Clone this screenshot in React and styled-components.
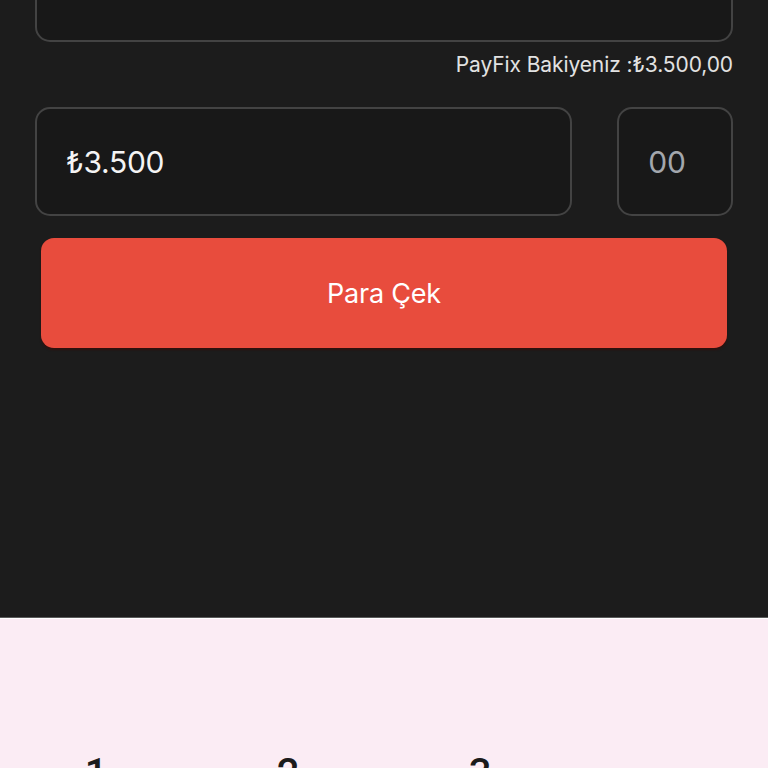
import React from "react";
import styled, { createGlobalStyle } from "styled-components";

const Global = createGlobalStyle`
  html, body { margin: 0; padding: 0; background: #1c1c1c; }
  body { font-family: Inter, "Noto Sans", sans-serif; overflow: hidden; }
  * { box-sizing: border-box; }
`;

const Page = styled.div`
  width: 768px;
  height: 768px;
  display: flex;
  flex-direction: column;
  overflow: hidden;
`;

const Form = styled.div`
  height: 617px;
  flex-shrink: 0;
  padding: 0 35px;
  display: flex;
  flex-direction: column;
  background: #1c1c1c;
`;

const Field = styled.div`
  height: 109px;
  border: 2px solid #434343;
  border-radius: 15px;
  background: #181818;
  display: flex;
  align-items: center;
  padding: ${(p) => (p.$center ? "0 16px 0 0" : "0 0 0 29px")};
  justify-content: ${(p) => (p.$center ? "center" : "flex-start")};
  flex: ${(p) => (p.$grow ? "1" : "none")};
  width: ${(p) => p.$w || "auto"};
  color: ${(p) => (p.$muted ? "#a3a7ad" : "#f4f4f4")};
  font-size: 30px;
  letter-spacing: -0.3px;
`;

const TopField = styled(Field)`
  margin-top: -67px;
`;

const Balance = styled.div`
  margin-top: 11px;
  text-align: right;
  font-size: 21px;
  line-height: 24px;
  color: #e2e2e2;
  letter-spacing: -0.1px;
`;

const Row = styled.div`
  margin-top: 30px;
  display: flex;
  gap: 45px;
`;

const Button = styled.button`
  margin: 22px 6px 0;
  height: 110px;
  border: none;
  border-radius: 13px;
  background: #e84c3d;
  color: #ffffff;
  font-family: inherit;
  font-size: 27px;
  letter-spacing: -0.2px;
  box-shadow: 0 2px 2px rgba(60, 10, 5, 0.6);
`;

const Keypad = styled.div`
  flex: 1;
  background: #fbecf4;
  border-top: 1px solid #5a5a5a;
  box-shadow: inset 0 1px 0 #ffffff;
  display: grid;
  grid-template-columns: repeat(4, 192px);
  align-content: start;
  padding-top: 132px;
`;

const Key = styled.div`
  text-align: center;
  font-family: Roboto, "Noto Sans", sans-serif;
  font-weight: 500;
  font-size: 40px;
  color: #1b1b1b;
`;

export default function App() {
  return (
    <Page>
      <Global />
      <Form>
        <TopField />
        <Balance>PayFix Bakiyeniz :₺3.500,00</Balance>
        <Row>
          <Field $grow>₺3.500</Field>
          <Field $w="116px" $center $muted>00</Field>
        </Row>
        <Button>Para Çek</Button>
      </Form>
      <Keypad>
        <Key>1</Key>
        <Key>2</Key>
        <Key>3</Key>
        <Key />
      </Keypad>
    </Page>
  );
}
